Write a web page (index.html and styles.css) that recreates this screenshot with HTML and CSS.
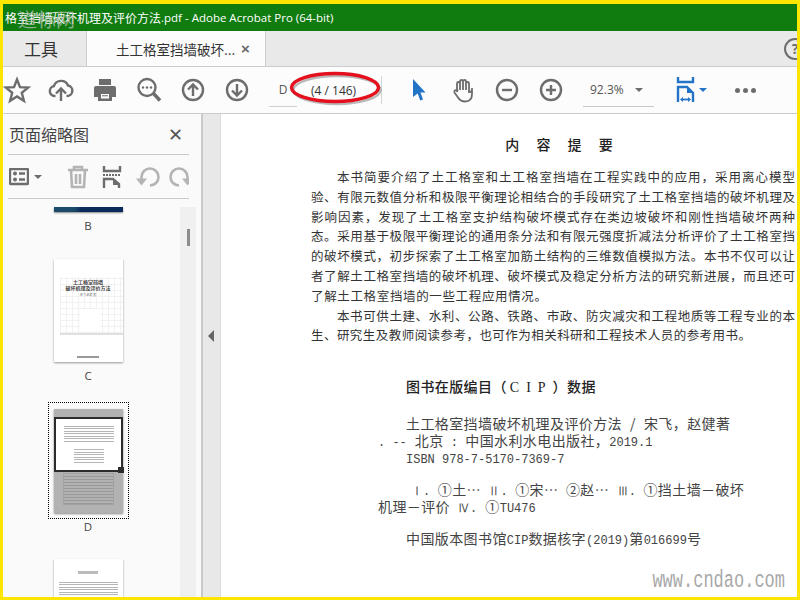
FILE: index.html
```html
<!DOCTYPE html>
<html lang="zh">
<head>
<meta charset="utf-8">
<title>Adobe Acrobat Pro</title>
<link rel="stylesheet" href="styles.css">
</head>
<body>
<div class="frame">
  <header class="titlebar">
    <span class="title-cjk">格室挡墙破坏机理及评价方法</span><span class="title-lat">.pdf - Adobe Acrobat Pro (64-bit)</span>
  </header>
  <nav class="tabbar">
    <div class="tab-tools">工具</div>
    <div class="tab-doc"><span class="tab-name">土工格室挡墙破坏...</span><span class="tab-close">×</span></div>
    <div class="help">?</div>
  </nav>
  <div class="toolbar">
    <div class="tool tool-first"><svg width="28" height="28" viewBox="0 0 28 28"><path class="s" d="M14 3.500l3 7.600 8.200.5-6.400 5.200 2.100 8-6.900-4.400-6.900 4.400 2.100-8-6.400-5.200 8.200-.5z"/></svg></div>
    <div class="tool"><svg width="26" height="26" viewBox="0 0 26 26"><path class="s" d="M7.500 19H6.500a5 5 0 0 1-.6-9.900A7.500 7.500 0 0 1 20 8.500a5.300 5.300 0 0 1-.5 10.500h-1"/><path class="s" d="M13 24V12M8 16.500l5-5 5 5"/></svg></div>
    <div class="tool"><svg width="26" height="26" viewBox="0 0 26 26"><path class="f" d="M7 2h12v6H7z"/><path class="f" fill-rule="evenodd" d="M4 9h18a2 2 0 0 1 2 2v9h-4v4H6v-4H2v-9a2 2 0 0 1 2-2zm5 8v4.500h8V17zm1 1.200h6v1h-6z"/></svg></div>
    <div class="tool"><svg width="26" height="26" viewBox="0 0 26 26"><circle class="s" cx="11" cy="10.500" r="8.500"/><path class="s thick" d="M17.500 16.500l6.500 7"/><circle class="f" cx="7" cy="10.500" r="1.200"/><circle class="f" cx="11" cy="10.500" r="1.200"/><circle class="f" cx="15" cy="10.500" r="1.200"/></svg></div>
    <div class="tool"><svg width="24" height="24" viewBox="0 0 24 24"><circle class="s" cx="12" cy="12" r="10"/><path class="s" d="M12 18V6.500M7 11.500l5-5 5 5"/></svg></div>
    <div class="tool"><svg width="24" height="24" viewBox="0 0 24 24"><circle class="s" cx="12" cy="12" r="10"/><path class="s" d="M12 6v11.500M7 12.500l5 5 5-5"/></svg></div>
    <div class="page-field"><span class="page-label">D</span></div>
    <div class="page-count">(4 / 146)</div>
    <div class="tool-sep"></div>
    <div class="tool"><svg width="16" height="24" viewBox="0 0 16 24"><path class="blue" d="M2 1l12.500 13.500H9.500l2.500 7-2.800 1-2.500-7L2 19z"/></svg></div>
    <div class="tool"><svg width="26" height="26" viewBox="0 0 26 26"><path class="s thin" d="M7 15V6.500a1.500 1.500 0 0 1 3 0V13V4.500a1.500 1.500 0 0 1 3 0V13V4.500a1.500 1.500 0 0 1 3 0V13V6.500a1.500 1.500 0 0 1 3 0V15c2 0 3-.5 3-2v-2 6c0 4-2 7.500-7 7.500-3.500 0-5.500-1.500-7-4l-3.500-5c-1-2 1.500-3.500 3-2z"/></svg></div>
    <div class="tool"><svg width="24" height="24" viewBox="0 0 24 24"><circle class="s" cx="12" cy="12" r="10"/><path class="s" d="M7 12h10"/></svg></div>
    <div class="tool"><svg width="24" height="24" viewBox="0 0 24 24"><circle class="s" cx="12" cy="12" r="10"/><path class="s" d="M7 12h10M12 7v10"/></svg></div>
    <div class="zoom-field"><span>92.3%</span><i class="caret"></i></div>
    <div class="fit"><svg width="20" height="26" viewBox="0 0 20 26"><path class="bs" d="M2 0v5h15V0"/><path class="bs" d="M2 25V10h9l6 6v9"/><path class="bf" d="M11 10v6h6z"/><path class="bs thin" d="M6 22.500h7"/><path class="bf" d="M4 22.500l3-2.500v5zM15 22.500l-3-2.500v5z"/></svg><i class="caret blue-caret"></i></div>
    <div class="more"><b></b><b></b><b></b></div>
    <svg class="ring" width="100" height="40" viewBox="0 0 100 40"><ellipse class="ring-shadow" cx="50" cy="22" rx="43.500" ry="14"/><ellipse class="ring-line" cx="48" cy="19.500" rx="43.500" ry="14"/></svg>
  </div>
  <main class="work">
    <aside class="side">
      <div class="side-head"><span class="side-title">页面缩略图</span><span class="side-x">✕</span></div>
      <div class="side-tools">
        <svg width="20" height="18" viewBox="0 0 20 18"><rect class="s" x="1" y="1" width="18" height="15" rx="1"/><circle class="f" cx="6" cy="5.500" r="2"/><circle class="f" cx="6" cy="11.500" r="2"/><path class="s" d="M10 5.500h6M10 11.500h6"/></svg>
        <i class="caret small"></i>
        <span class="side-sep"></span>
        <svg class="t1" width="22" height="24" viewBox="0 0 22 24"><path class="ls" d="M1 5h20M7 5V2h8v3M4 5l1 17h12l1-17M9 9v10M13 9v10"/></svg>
        <svg class="t2" width="20" height="22" viewBox="0 0 20 22"><path class="s" d="M2 0v5h16V0"/><path class="dash" d="M1 9h18"/><path class="s" d="M2 22V13h9l6 5v4"/><path class="f" d="M11 13v6h6z"/></svg>
        <svg class="t3" width="24" height="22" viewBox="0 0 24 22"><path class="ls" d="M14 19.500A8.500 8.500 0 1 0 5.500 11v2"/><path class="lf" d="M0 12.500h11l-5.500 7z"/></svg>
        <svg class="t4" width="24" height="22" viewBox="0 0 24 22"><path class="ls" d="M10 19.500A8.500 8.500 0 1 1 18.500 11v2"/><path class="lf" d="M24 12.500H13l5.500 7z"/></svg>
      </div>
      <div class="thumbs">
        <div class="thumb-list">
          <div class="thumb-b"></div>
          <div class="label">B</div>
          <div class="thumb-c">
            <div class="c-grid"><i class="c-blank"></i></div>
            <div class="c-title">土工格室挡墙<br>破坏机理及评价方法</div>
            <div class="c-auth">宋飞 赵健 著</div>
            <div class="c-pub"></div>
          </div>
          <div class="label">C</div>
          <div class="select">
            <div class="thumb-d">
              <div class="d-top"></div>
              <div class="d-view">
                <div class="d-lines"></div>
                <div class="d-lines d-short"></div>
                <i class="d-handle"></i>
              </div>
              <div class="d-lower"><div class="d-table"></div></div>
            </div>
          </div>
          <div class="label label-d">D</div>
          <div class="thumb-e"><div class="e-head"></div><div class="e-lines"></div></div>
        </div>
        <div class="scroll"><i class="scroll-thumb"></i></div>
      </div>
    </aside>
    <div class="gutter"><i class="collapse"></i></div>
    <section class="doc">
      <h1 class="doc-h">内 容 提 要</h1>
      <p class="l i">本书简要介绍了土工格室和土工格室挡墙在工程实践中的应用，采用离心模型</p>
      <p class="l">验、有限元数值分析和极限平衡理论相结合的手段研究了土工格室挡墙的破坏机理及</p>
      <p class="l">影响因素，发现了土工格室支护结构破坏模式存在类边坡破坏和刚性挡墙破坏两种</p>
      <p class="l">态。采用基于极限平衡理论的通用条分法和有限元强度折减法分析评价了土工格室挡</p>
      <p class="l">的破坏模式，初步探索了土工格室加筋土结构的三维数值模拟方法。本书不仅可以让</p>
      <p class="l">者了解土工格室挡墙的破坏机理、破坏模式及稳定分析方法的研究新进展，而且还可</p>
      <p class="l end1">了解土工格室挡墙的一些工程应用情况。</p>
      <p class="l i">本书可供土建、水利、公路、铁路、市政、防灾减灾和工程地质等工程专业的本</p>
      <p class="l end2">生、研究生及教师阅读参考，也可作为相关科研和工程技术人员的参考用书。</p>
      <h2 class="cip-h">图书在版编目（<span class="cip-abbr">CIP</span>）数据</h2>
      <p class="c">土工格室挡墙破坏机理及评价方法 / 宋飞，赵健著</p>
      <p class="c out"><span class="m">. --</span> 北京<span class="m"> : </span>中国水利水电出版社，<span class="m">2019.1</span></p>
      <p class="c"><span class="m">ISBN 978-7-5170-7369-7</span></p>
      <p class="c gap c-roman"><span class="m">Ⅰ.</span> ①土… <span class="m">Ⅱ.</span> ①宋… ②赵… <span class="m">Ⅲ.</span> ①挡土墙－破坏</p>
      <p class="c out">机理－评价 <span class="m">Ⅳ.</span> ①<span class="m">TU476</span></p>
      <p class="c gap">中国版本图书馆<span class="m">CIP</span>数据核字<span class="m">(2019)</span>第<span class="m">016699</span>号</p>
      <div class="mark">www.cndao.com</div>
    </section>
  </main>
  <span class="stamp">道标网</span>
</div>
</body>
</html>
```
FILE: styles.css
```css
* { box-sizing: border-box; }
html, body { margin: 0; padding: 0; }
body { width: 800px; height: 600px; overflow: hidden; background: #ffe600; font-family: "Open Sans", "Noto Sans CJK SC", sans-serif; }
.frame { width: 800px; height: 600px; padding: 4px 3px 3px 3px; display: flex; flex-direction: column; position: relative; }
.titlebar { height: 27px; flex: none; background: #107c10; color: #fff; display: flex; align-items: center; padding-left: 2px; white-space: nowrap; overflow: hidden; }
.title-cjk { font: 12px "Noto Sans CJK SC", sans-serif; }
.title-lat { font: 11.500px "Open Sans", sans-serif; }
.stamp { position: absolute; left: 18px; top: 7px; font: 19px/24px "Noto Sans CJK SC", sans-serif; letter-spacing: 0; color: rgba(185, 195, 185, .75); }
.tabbar { height: 36px; flex: none; background: #e9e9e9; display: flex; border-bottom: 1px solid #cbcbcb; position: relative; overflow: hidden; }
.tab-tools { width: 83px; display: flex; align-items: center; padding-left: 21px; font: 17px "Noto Sans CJK SC", sans-serif; color: #333; }
.tab-doc { width: 180px; background: #fcfcfc; border-left: 1px solid #ccc; border-right: 1px solid #ccc; display: flex; align-items: center; padding-left: 29px; }
.tab-name { width: 123px; font: 13.500px "Noto Sans CJK SC", sans-serif; color: #333; white-space: nowrap; }
.tab-close { font: bold 15px "Liberation Sans", sans-serif; color: #6a6a6a; margin-left: 2px; }
.help { position: absolute; right: -9px; top: 7px; width: 22px; height: 22px; border: 2px solid #6d6d6d; border-radius: 50%; font: bold 14px/18px "Open Sans", sans-serif; color: #6d6d6d; text-align: center; }
.toolbar { height: 47px; flex: none; background: #fcfcfc; border-bottom: 1px solid #cbcbcb; display: flex; align-items: center; position: relative; }
.tool { width: 44px; height: 44px; flex: none; display: flex; align-items: center; justify-content: center; }
.tool-first { width: 28px; margin-right: 8px; }
svg { display: block; flex: none; }
.s, .ls, .bs { fill: none; stroke: #6d6d6d; stroke-width: 2.400; }
.ls { stroke: #b4b4b4; stroke-width: 2.600; }
.lf { fill: #b4b4b4; }
.bs { stroke: #2373c6; }
.dash { fill: none; stroke: #6d6d6d; stroke-width: 2; stroke-dasharray: 2 1; }
.thick { stroke-width: 3.500; }
.thin { stroke-width: 1.800; }
.f { fill: #6d6d6d; }
.bf { fill: #2373c6; }
.blue { fill: #2373c6; }
.page-field { width: 28px; height: 34px; margin-left: 10px; flex: none; border-bottom: 1px solid #cfcfcf; display: flex; align-items: center; justify-content: center; font-size: 12px; color: #555; }
.page-count { width: 84px; flex: none; padding-left: 14px; font-size: 12px; color: #333; white-space: nowrap; }
.tool-sep { width: 1px; height: 28px; background: #d5d5d5; margin-right: 15px; flex: none; }
.zoom-field { width: 71px; height: 34px; margin-left: 10px; flex: none; display: flex; align-items: center; justify-content: space-between; padding: 0 11px 0 7px; border-bottom: 1px solid #c8c8c8; font-size: 12px; color: #555; }
.caret { display: block; width: 0; height: 0; border-left: 4px solid transparent; border-right: 4px solid transparent; border-top: 4px solid #6d6d6d; flex: none; }
.fit { display: flex; align-items: center; gap: 3px; margin-left: 22px; flex: none; }
.blue-caret { border-top-color: #2373c6; }
.more { display: flex; gap: 3px; margin-left: 28px; }
.more b { display: block; width: 5px; height: 5px; border-radius: 50%; background: #6d6d6d; }
.ring { position: absolute; left: 284px; top: 1px; }
.ring-line { fill: none; stroke: #e5101e; stroke-width: 3.400; }
.ring-shadow { fill: none; stroke: rgba(60, 60, 60, .35); stroke-width: 2.500; }
.work { flex: 1; min-height: 0; display: flex; }
.side { width: 200px; flex: none; background: #fafafa; border-right: 2px solid #c9c9c9; display: flex; flex-direction: column; padding-left: 5px; }
.side-head { height: 41px; flex: none; width: 181px; display: flex; align-items: center; justify-content: space-between; border-bottom: 1px solid #cacaca; padding: 0 6px 0 1px; }
.side-title { font: 16px "Noto Sans CJK SC", sans-serif; color: #444; }
.side-x { font: 18px "DejaVu Sans", sans-serif; color: #555; font-weight: bold; }
.side-tools { height: 44px; flex: none; width: 181px; display: flex; align-items: center; border-bottom: 1px solid #cacaca; padding-left: 1px; overflow: hidden; }
.small { margin-left: 5px; }
.side-sep { width: 1px; height: 28px; background: #d5d5d5; margin-left: 7px; }
.t1 { margin-left: 18px; }
.t2 { margin-left: 13px; }
.t3 { margin-left: 14px; }
.t4 { margin-left: 9px; }
.thumbs { flex: 1; min-height: 0; margin: 8px 0 0 -5px; display: flex; overflow: hidden; position: relative; }
.thumb-list { width: 177px; flex: none; display: flex; flex-direction: column; align-items: center; padding-right: 7px; }
.thumb-b { width: 69px; height: 5px; flex: none; background: linear-gradient(100deg, #1c4a6a 30%, #0a2a5c 40%); box-shadow: 0 1px 2px #888; }
.label { font-size: 11.500px; line-height: 16px; margin-top: 6px; height: 16px; flex: none; color: #444; }
.thumb-c { width: 69px; height: 103px; flex: none; margin-top: 25px; background: #fff; box-shadow: 0 1px 2px #999; padding-top: 20px; text-align: center; position: relative; overflow: hidden; }
.c-title { font: 5px/6px "Noto Sans CJK SC", sans-serif; color: #444; font-weight: bold; white-space: nowrap; position: relative; }
.c-auth { font: 3px/4px "Noto Sans CJK SC", sans-serif; color: #777; margin-top: 2px; position: relative; }
.c-grid { position: absolute; left: 6px; right: 0; top: 18px; height: 58px; background: repeating-linear-gradient(0deg, #f1f1f1 0 1px, transparent 1px 6px), repeating-linear-gradient(90deg, #f1f1f1 0 1px, transparent 1px 6px); border-bottom: 2px solid #e0e0e0; }
.c-blank { position: absolute; left: 20px; top: 32px; width: 20px; height: 22px; background: #fff; }
.c-pub { width: 22px; height: 2px; background: #999; margin: 59px auto 0; position: relative; }
.select { width: 81px; height: 117px; flex: none; margin-top: 18px; border: 1px dotted #000; padding: 6px 5px; }
.thumb-d { width: 69px; height: 104px; background: #b2b2b2; box-shadow: 0 1px 2px #888; display: flex; flex-direction: column; }
.d-top { height: 8px; flex: none; }
.d-view { height: 55px; flex: none; border: 2px solid #2c2c2c; background: #fff; position: relative; padding: 5px 7px 3px 8px; }
.d-lines { height: 18px; background: repeating-linear-gradient(0deg, #b5b5b5 0 1px, transparent 1px 2.500px); }
.d-short { height: 14px; margin: 7px 10px 0; }
.d-handle { position: absolute; right: -3px; bottom: -3px; width: 6px; height: 6px; background: #2c2c2c; }
.d-lower { flex: 1; padding: 1px 9px; }
.d-table { height: 32px; border: 1px solid #a2a2a2; background: repeating-linear-gradient(0deg, #989898 0 1px, transparent 1px 3px); }
.label-d { margin-top: 0; }
.thumb-e { width: 69px; height: 60px; flex: none; margin-top: 24px; background: #fff; box-shadow: 0 1px 2px #999; padding: 12px 5px; }
.e-head { width: 20px; height: 3px; margin: 0 auto 6px; background: #bbb; }
.e-lines { height: 20px; background: repeating-linear-gradient(0deg, #b5b5b5 0 1px, transparent 1px 2.500px); }
.scroll { width: 16px; flex: none; background: #f0f0f0; margin-left: 0; position: relative; }
.scroll-thumb { display: block; width: 3px; height: 17px; background: #8c8c8c; margin: 22px 0 0 7px; }
.gutter { width: 18px; flex: none; background: #e8e8e8; border-right: 1px solid #ddd; display: flex; align-items: center; padding: 0 0 40px 5px; }
.collapse { display: block; width: 0; height: 0; border-top: 6px solid transparent; border-bottom: 6px solid transparent; border-right: 6px solid #666; }
.doc { flex: 1; min-width: 0; background: #fff; padding: 20px 0 0 90px; position: relative; overflow: hidden; font-family: "Noto Sans CJK SC", sans-serif; color: #333; }
.doc p { margin: 0; }
.doc-h { margin: 0 0 13px; width: 496px; text-align: center; font-size: 14px; line-height: 20px; font-weight: 500; color: #222; word-spacing: 14px; }
.l { width: 484px; font-size: 12.500px; line-height: 19.800px; height: 19.800px; white-space: nowrap; text-align: justify; text-align-last: justify; }
.i { padding-left: 26px; }
.end1 { width: 236px; }
.end2 { width: 440px; }
.cip-h { margin: 31px 0 17px 95px; font-size: 14px; line-height: 20px; font-weight: 500; color: #222; letter-spacing: .4px; white-space: nowrap; }
.cip-abbr { letter-spacing: 7px; font-weight: 400; font-family: "Liberation Serif", serif; margin-left: 3px; }
.c { margin-left: 95px !important; font-size: 14px; letter-spacing: .4px; word-spacing: 4.500px; line-height: 17px; height: 17px; white-space: nowrap; color: #444; }
.m { font: 12px/17px "Liberation Mono", monospace; letter-spacing: 0; word-spacing: 0; }
.out { margin-left: 67px !important; }
.gap { margin-top: 15px !important; }
.c-roman { padding-left: 5px; word-spacing: 4px; }
.mark { position: absolute; right: 12px; bottom: 5px; font: 17px/22px "Liberation Mono", monospace; color: #a8a8a8; transform: scaleY(1.450); }
```
